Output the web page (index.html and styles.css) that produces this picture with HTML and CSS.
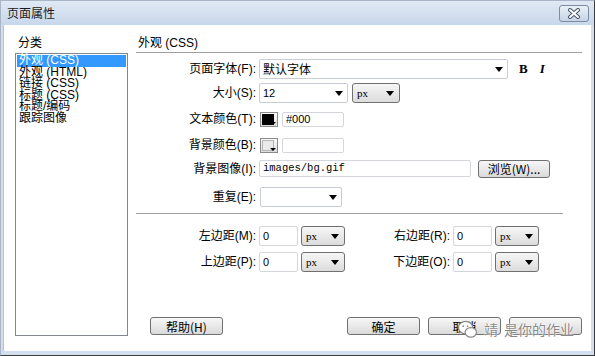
FILE: index.html
```html
<!DOCTYPE html>
<html lang="zh-CN">
  <head>
    <meta charset="UTF-8" />
    <title>页面属性</title>
    <link rel="stylesheet" href="styles.css">
  </head>
  <body>
    <div class="window">
      <!-- ===== TITLE BAR ===== -->
      <div class="titlebar">
        <span class="title">页面属性</span>
        <button class="close" aria-label="close">
          <svg viewBox="0 0 16 11"><path d="M4 2L12 9M12 2L4 9" stroke="#47566b" stroke-width="4" stroke-linecap="round"/><path d="M4 2L12 9M12 2L4 9" stroke="#fff" stroke-width="2" stroke-linecap="round"/></svg>
        </button>
      </div>

      <!-- ===== DIALOG BODY ===== -->
      <div class="dlg-body">
        <div class="cat-col">
          <div class="cat-label">分类</div>
          <ul class="cat-list">
            <li class="sel">外观 (CSS)</li>
            <li>外观 (HTML)</li>
            <li>链接 (CSS)</li>
            <li>标题 (CSS)</li>
            <li>标题/编码</li>
            <li>跟踪图像</li>
          </ul>
        </div>

        <div class="main-col">
          <div class="section-title">外观 (CSS)</div>

          <div class="row r1">
            <label>页面字体(F):</label>
            <div class="select w-font">默认字体<i class="arrow"></i></div>
            <span class="fmt-b">B</span>
            <span class="fmt-i">I</span>
          </div>
          <div class="row r2">
            <label>大小(S):</label>
            <div class="select w-size">12<i class="arrow"></i></div>
            <div class="unit w-unit1">px<i class="arrow"></i></div>
          </div>
          <div class="row r3">
            <label>文本颜色(T):</label>
            <div class="swatch"><span class="chip black"></span><i class="tri"></i></div>
            <div class="field w-color">#000</div>
          </div>
          <div class="row r4">
            <label>背景颜色(B):</label>
            <div class="swatch"><span class="chip empty"></span><i class="tri"></i></div>
            <div class="field w-color"></div>
          </div>
          <div class="row r5">
            <label>背景图像(I):</label>
            <div class="field w-img mono">images/bg.gif</div>
            <button class="btn w-browse">浏览(W)...</button>
          </div>
          <div class="row r6">
            <label>重复(E):</label>
            <div class="select w-repeat"><i class="arrow"></i></div>
          </div>

          <div class="sep"></div>

          <div class="row margins m1">
            <label>左边距(M):</label>
            <div class="field w-num">0</div>
            <div class="unit w-unit">px<i class="arrow"></i></div>
            <label class="lbl-r">右边距(R):</label>
            <div class="field w-num">0</div>
            <div class="unit w-unit">px<i class="arrow"></i></div>
          </div>
          <div class="row margins m2">
            <label>上边距(P):</label>
            <div class="field w-num">0</div>
            <div class="unit w-unit">px<i class="arrow"></i></div>
            <label class="lbl-r">下边距(O):</label>
            <div class="field w-num">0</div>
            <div class="unit w-unit">px<i class="arrow"></i></div>
          </div>

          <div class="buttons">
            <button class="btn help">帮助(H)</button>
            <div class="btn-group">
              <button class="btn">确定</button>
              <button class="btn">取消</button>
              <button class="btn"></button>
            </div>
          </div>
        </div>
      </div>

      <!-- watermark overlay -->
      <div class="watermark">
        <svg viewBox="0 0 22 20"><ellipse cx="9" cy="8" rx="7.5" ry="6.5" fill="#fff" stroke="#8a8a8a" stroke-width="1.3"/><ellipse cx="14.5" cy="13" rx="6" ry="5" fill="#fff" stroke="#8a8a8a" stroke-width="1.3"/><circle cx="6.5" cy="6.5" r=".9" fill="#8a8a8a"/><circle cx="11" cy="6.5" r=".9" fill="#8a8a8a"/></svg>
        <span>靖</span><span>是你的作业</span>
      </div>
    </div>
  </body>
</html>
```

FILE: styles.css
```css
:root{
  --c-frame:#d2deed;
  --c-line:#a0a0a0;
  --c-sel:#3399ff;
  --f-ui:"Liberation Sans","Noto Sans CJK SC",sans-serif;
}
*,*::before,*::after{box-sizing:border-box;margin:0;padding:0}
html,body{width:595px;height:356px;overflow:hidden;background:#fff}
body{font-family:var(--f-ui);font-size:12px;color:#000}
button{font:inherit;color:inherit}
ul{list-style:none}

/* ===== WINDOW ===== */
.window{position:relative;width:595px;height:356px;display:flex;flex-direction:column;background:var(--c-frame);border:1px solid;border-color:#a9b5c4 #3c3c3c #3c3c3c #a9b5c4;padding:0 3px 4px 2px}
.titlebar{height:24px;flex:none;display:flex;align-items:center;justify-content:space-between;margin:0 -3px 0 -2px;padding:0 5px 0 6px;background:linear-gradient(#e0e9f5,#c7d7ea)}
.title{font-family:"Noto Sans CJK SC",sans-serif;font-size:12px;color:#1b1b1b;line-height:14px}
.close{width:30px;height:17px;border:1px solid #7d8ca1;border-radius:3px;background:linear-gradient(#e9f0f8,#c6d4e6);display:grid;place-items:center}
.close svg{width:16px;height:11px}

/* ===== BODY ===== */
.dlg-body{flex:1;background:#fff;display:flex;gap:8px;padding:11px 9px 15px 11px;border-left:1px solid #b9c4d1}
.cat-col{width:113px;display:flex;flex-direction:column}
.cat-label{line-height:14px;padding-left:3px;margin-bottom:3px}
.cat-list{flex:1;border:1px solid #828790;padding:1px}
.cat-list li{line-height:11.6px;height:11.6px;padding-left:2px;white-space:nowrap}
.cat-list li.sel{background:var(--c-sel);color:#fff}

.main-col{flex:1;display:flex;flex-direction:column}
.section-title{line-height:14px;padding:0 0 2px 2px;border-bottom:1px solid var(--c-line)}

/* form rows */
.row{display:flex;align-items:center}
.row label{width:123px;flex:none;text-align:right;padding-right:3px;line-height:14px;white-space:nowrap}
.r1{height:20px;margin-top:6px}
.r2{height:20px;margin-top:4px}
.r3{height:18px;margin-top:7px}
.r4{height:18px;margin-top:8px}
.r5{height:19px;margin-top:5px}
.r6{height:21px;margin-top:8px}
.m1{height:21px;margin-top:11px}
.m2{height:21px;margin-top:5px}
.row .lbl-r{width:108px}

.select{position:relative;height:20px;border:1px solid #c8ccd3;border-radius:2px;background:#fff;padding:0 14px 0 3px;line-height:18px;font-size:12px}
.w-font{width:249px;font-family:"Noto Sans CJK SC",sans-serif}
.w-size{width:89px;font-size:11px}
.w-repeat{width:82px;margin-left:1px}
.arrow{position:absolute;right:4px;top:50%;margin-top:-2px;border:4px solid transparent;border-top:5px solid #000;border-bottom:0}

.unit{position:relative;height:20px;border:1px solid #707070;border-radius:3px;background:linear-gradient(#f6f6f6,#dcdcdc);padding-left:4px;line-height:19px;font-family:"Liberation Serif",serif;font-size:11px}
.w-unit1{width:48px;margin-left:4px}
.w-unit{width:44px;margin-left:3px}
.unit .arrow{right:5px}

.fmt-b{margin-left:11px;font-family:"Liberation Serif",serif;font-weight:bold;font-size:13px}
.fmt-i{margin-left:12px;font-family:"Liberation Serif",serif;font-weight:bold;font-style:italic;font-size:13px}

.field{height:15px;border:1px solid #d3d6db;border-radius:2px;background:#fff;padding-left:3px;line-height:13px;font-size:11px;white-space:nowrap}
.w-color{width:62px;margin-left:4px}
.w-img{width:212px;height:17px;line-height:15px}
.w-num{width:39px;height:20px;line-height:18px}
.mono{font-family:"Liberation Mono",monospace;font-size:10.5px}

.swatch{position:relative;width:18px;height:15px;margin-left:1px;border:1px solid #8a8a8a;background:linear-gradient(#fbfbfb,#dedede);padding:1px}
.chip{display:block;width:12px;height:11px}
.chip.black{background:#000}
.chip.empty{background:#eaeaea;border:1px solid #b4b4b4}
.tri{position:absolute;right:1px;bottom:1px;border:3px solid transparent;border-top:3px solid #000;border-bottom:0}

.btn{height:18px;border:1px solid #707070;border-radius:3px;background:linear-gradient(#f7f7f7,#dadada);font-family:"Noto Sans CJK SC",sans-serif;font-size:12px;line-height:15px}
.w-browse{width:72px;margin-left:7px}

.sep{width:427px;height:1px;background:var(--c-line);margin-top:6px}

/* bottom buttons */
.buttons{margin-top:auto;margin-bottom:1px;display:flex;justify-content:space-between;padding-left:14px}
.buttons .btn{width:73px}
.btn-group{display:flex;gap:8px}

/* watermark */
.watermark{position:absolute;left:456px;top:318px;display:flex;align-items:center;gap:6px;font-family:"Noto Sans CJK SC",sans-serif;font-size:14px;color:rgba(115,115,115,.85);text-shadow:0 0 2px #fff,0 0 2px #fff}
.watermark svg{width:21px;height:19px}
```
